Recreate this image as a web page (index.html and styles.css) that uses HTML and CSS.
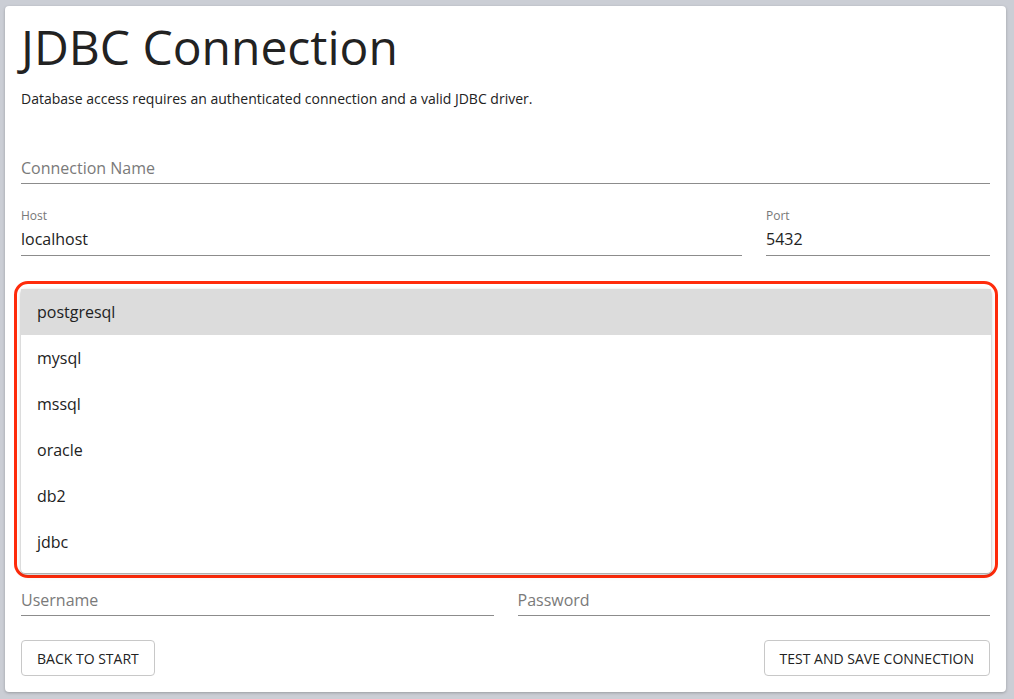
FILE: index.html
```html
<!DOCTYPE html>
<html lang="en">
<head>
<meta charset="utf-8">
<title>JDBC Connection</title>
<link rel="stylesheet" href="styles.css">
</head>
<body>
<div class="card">
  <h1 class="title">JDBC Connection</h1>
  <p class="subtitle">Database access requires an authenticated connection and a valid JDBC driver.</p>

  <div class="field field-full field-empty">
    <div class="input placeholder">Connection Name</div>
  </div>

  <div class="row row-host">
    <div class="field field-grow">
      <div class="label">Host</div>
      <div class="input">localhost</div>
    </div>
    <div class="field field-port">
      <div class="label">Port</div>
      <div class="input">5432</div>
    </div>
  </div>

  <div class="highlight">
    <ul class="menu">
      <li class="menu-item selected">postgresql</li>
      <li class="menu-item">mysql</li>
      <li class="menu-item">mssql</li>
      <li class="menu-item">oracle</li>
      <li class="menu-item">db2</li>
      <li class="menu-item">jdbc</li>
    </ul>
  </div>

  <div class="row row-cred">
    <div class="field field-half">
      <div class="input placeholder">Username</div>
    </div>
    <div class="field field-half">
      <div class="input placeholder">Password</div>
    </div>
  </div>

  <div class="actions">
    <button class="btn" type="button">Back to start</button>
    <button class="btn" type="button">Test and save connection</button>
  </div>
</div>
</body>
</html>
```

FILE: styles.css
```css
html, body {
  margin: 0;
  padding: 0;
}
body {
  background: #cbced5;
  font-family: "Open Sans", "Noto Sans", sans-serif;
  color: #222;
  width: 1014px;
  height: 699px;
  overflow: hidden;
}
.card {
  box-sizing: border-box;
  margin: 6px 8px 0 5px;
  width: 1001px;
  height: 686px;
  background: #fff;
  border-radius: 4px;
  box-shadow: 0 1px 3px rgba(0,0,0,0.25);
  padding: 9px 16px 16px 16px;
}
.title {
  margin: 0;
  font-size: 48px;
  font-weight: 400;
  line-height: 64px;
  color: #222;
  letter-spacing: 0;
}
.subtitle {
  margin: 10px 0 0 0;
  font-size: 14px;
  line-height: 20px;
  color: #222;
}
.field {
  display: flex;
  flex-direction: column;
}
.field-empty {
  margin-top: 42px;
}
.label {
  font-size: 12px;
  line-height: 16px;
  color: #777;
}
.input {
  font-size: 16px;
  line-height: 23px;
  padding: 4px 0 5px 0;
  border-bottom: 1px solid #8c8c8c;
  color: #222;
}
.input.placeholder {
  color: #7a7a7a;
  padding: 6px 0 3px 0;
}
.row {
  display: flex;
  gap: 24px;
}
.row-host {
  margin-top: 24px;
}
.row-host .input {
  padding: 4px 0 4px 0;
}
.field-grow {
  flex: 1;
}
.field-port {
  width: 224px;
}
.highlight {
  margin: 25px -8px 0 -7px;
  border: 3px solid #ff2b0b;
  border-radius: 14px;
  padding: 5px 4px 2px 4px;
}
.menu {
  list-style: none;
  margin: 0;
  padding: 0 0 8px 0;
  background: #fff;
  border-radius: 4px;
  box-shadow: 0 1px 2px rgba(0,0,0,0.35), 0 2px 6px rgba(0,0,0,0.12);
}
.menu-item {
  height: 46px;
  display: flex;
  align-items: center;
  padding: 0 16px;
  font-size: 16px;
  color: #222;
}
.menu-item.selected {
  background: #dcdcdc;
}
.row-cred {
  margin-top: 5px;
}
.field-half {
  flex: 1;
}
.actions {
  display: flex;
  justify-content: space-between;
  margin-top: 24px;
}
.btn {
  font-family: "Open Sans", "Noto Sans", sans-serif;
  font-size: 14px;
  text-transform: uppercase;
  height: 36px;
  padding: 0 15px;
  background: #fff;
  border: 1px solid #c8c8c8;
  border-radius: 4px;
  color: #222;
  letter-spacing: 0;
}
```
